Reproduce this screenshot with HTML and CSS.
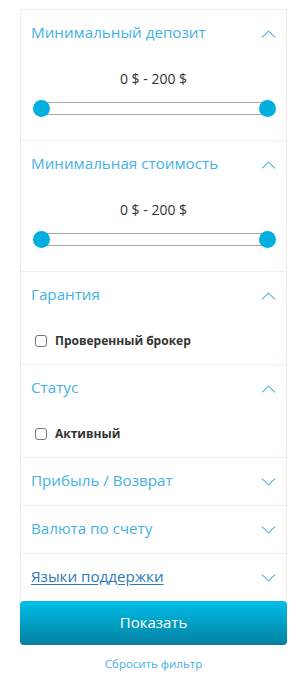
FILE: index.html
```html
<!DOCTYPE html>
<html lang="ru">
<head>
<meta charset="utf-8">
<link rel="stylesheet" href="styles.css">
</head>
<body>
<div class="filter">
  <div class="panel">
    <section class="sec sec-range">
      <div class="head"><span class="title">Минимальный депозит</span>
        <svg class="chev" viewBox="0 0 16 8"><path d="M1 7.5 L8 1 L15 7.5"/></svg></div>
      <div class="range-val">0 $ - 200 $</div>
      <div class="slider"><span class="track"></span><span class="knob"></span><span class="knob"></span></div>
    </section>
    <section class="sec sec-range">
      <div class="head"><span class="title">Минимальная стоимость</span>
        <svg class="chev" viewBox="0 0 16 8"><path d="M1 7.5 L8 1 L15 7.5"/></svg></div>
      <div class="range-val">0 $ - 200 $</div>
      <div class="slider"><span class="track"></span><span class="knob"></span><span class="knob"></span></div>
    </section>
    <section class="sec sec-check">
      <div class="head"><span class="title">Гарантия</span>
        <svg class="chev" viewBox="0 0 16 8"><path d="M1 7.5 L8 1 L15 7.5"/></svg></div>
      <label class="check"><span class="box"></span>Проверенный брокер</label>
    </section>
    <section class="sec sec-check">
      <div class="head"><span class="title">Статус</span>
        <svg class="chev" viewBox="0 0 16 8"><path d="M1 7.5 L8 1 L15 7.5"/></svg></div>
      <label class="check"><span class="box"></span>Активный</label>
    </section>
    <section class="sec">
      <div class="head"><span class="title">Прибыль / Возврат</span>
        <svg class="chev" viewBox="0 0 16 8"><path d="M1 0.5 L8 7 L15 0.5"/></svg></div>
    </section>
    <section class="sec">
      <div class="head"><span class="title">Валюта по счету</span>
        <svg class="chev" viewBox="0 0 16 8"><path d="M1 0.5 L8 7 L15 0.5"/></svg></div>
    </section>
    <section class="sec last">
      <div class="head"><span class="title link">Языки поддержки</span>
        <svg class="chev" viewBox="0 0 16 8"><path d="M1 0.5 L8 7 L15 0.5"/></svg></div>
    </section>
  </div>
  <button class="show">Показать</button>
  <div class="reset">Сбросить фильтр</div>
</div>
</body>
</html>
```
FILE: styles.css
```css
* { box-sizing: border-box; }
html, body { margin: 0; padding: 0; background: #fff; }
body { font-family: "Open Sans", "Liberation Sans", sans-serif; color: #333; }
.filter { padding: 9px 20px 0 20px; }
.panel {
  border: 1px solid #f8ebe7;
  border-bottom: none;
}
.sec { border-bottom: 1px solid #f8ebe7; }
.sec.last { border-bottom: none; }
.sec-range { height: 131px; }
.sec-check { height: 93px; }
.head {
  height: 47px;
  display: flex;
  align-items: center;
  justify-content: space-between;
  padding: 0 10px 0 10px;
}
.title {
  font-size: 15.2px;
  color: #43b2e4;
  margin-bottom: 3px;
}
.title.link {
  color: #2c7bb8;
  text-decoration: underline;
  text-underline-offset: 2px;
}
.chev {
  width: 15px;
  height: 8px;
  fill: none;
  stroke: #43b2e4;
  stroke-width: 1.1;
}
.range-val {
  text-align: center;
  font-size: 14px;
  line-height: 20px;
  margin-top: 12px;
  color: #333;
}
.slider {
  position: relative;
  height: 17px;
  margin: 11px 10px 0 12px;
}
.track {
  position: absolute;
  left: 8px;
  right: 8px;
  top: 2px;
  height: 13px;
  border-top: 1px solid #a8a8a8;
  border-bottom: 1px solid #a8a8a8;
  background: #fff;
}
.knob {
  position: absolute;
  top: 0;
  width: 17px;
  height: 17px;
  border-radius: 50%;
  background: #00afe0;
}
.slider .knob:nth-child(2) { left: 0; }
.slider .knob:nth-child(3) { right: 0; }
.check {
  display: flex;
  align-items: center;
  gap: 8px;
  margin: 15px 0 0 14px;
  font-size: 12px;
  font-weight: 700;
  color: #333;
  line-height: 14px;
}
.box {
  width: 12px;
  height: 12px;
  border: 1px solid #777;
  border-radius: 3px;
  background: #fff;
}
.show {
  display: block;
  width: 100%;
  height: 44px;
  border: none;
  border-radius: 4px;
  background: linear-gradient(#00bee9, #0480a0);
  color: #fff;
  font-family: "Open Sans", "Liberation Sans", sans-serif;
  font-size: 15px;
  padding: 0 0 2px 0;
}
.reset {
  text-align: center;
  font-size: 11.5px;
  color: #43b2e4;
  margin-top: 11px;
}
```
